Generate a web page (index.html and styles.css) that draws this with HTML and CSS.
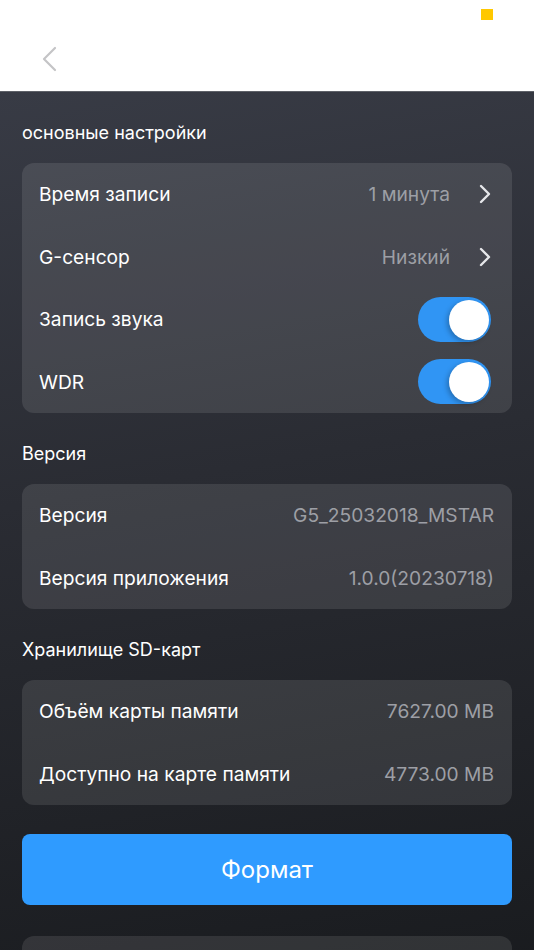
FILE: index.html
```html
<!DOCTYPE html>
<html>
  <head>
    <title>Настройки</title>
    <link rel="stylesheet" href="styles.css">
  </head>
  <body>
    <header class="top-bar">
      <span class="status-dot"></span>
      <button class="back-btn" aria-label="Назад">
        <svg width="16" height="26" viewBox="0 0 16 26">
          <path d="M14 2 L3 13 L14 24" fill="none" stroke="#c4c4c6" stroke-width="2.2" stroke-linecap="round" stroke-linejoin="round"/>
        </svg>
      </button>
    </header>

    <main class="content">
      <h2 class="section-title">основные настройки</h2>
      <div class="card">
        <div class="row">
          <span class="label">Время записи</span>
          <span class="side">
            <span class="value">1 минута</span>
            <svg class="chevron" width="14" height="22" viewBox="0 0 14 22">
              <path d="M3 3 L11 11 L3 19" fill="none" stroke="#e6e7ea" stroke-width="2.4" stroke-linecap="round" stroke-linejoin="round"/>
            </svg>
          </span>
        </div>
        <div class="row">
          <span class="label">G-сенсор</span>
          <span class="side">
            <span class="value">Низкий</span>
            <svg class="chevron" width="14" height="22" viewBox="0 0 14 22">
              <path d="M3 3 L11 11 L3 19" fill="none" stroke="#e6e7ea" stroke-width="2.4" stroke-linecap="round" stroke-linejoin="round"/>
            </svg>
          </span>
        </div>
        <div class="row">
          <span class="label">Запись звука</span>
          <span class="toggle on"><span class="knob"></span></span>
        </div>
        <div class="row">
          <span class="label">WDR</span>
          <span class="toggle on"><span class="knob"></span></span>
        </div>
      </div>

      <h2 class="section-title">Версия</h2>
      <div class="card">
        <div class="row">
          <span class="label">Версия</span>
          <span class="value">G5_25032018_MSTAR</span>
        </div>
        <div class="row">
          <span class="label">Версия приложения</span>
          <span class="value">1.0.0(20230718)</span>
        </div>
      </div>

      <h2 class="section-title">Хранилище SD-карт</h2>
      <div class="card">
        <div class="row">
          <span class="label">Объём карты памяти</span>
          <span class="value">7627.00 MB</span>
        </div>
        <div class="row">
          <span class="label">Доступно на карте памяти</span>
          <span class="value">4773.00 MB</span>
        </div>
      </div>

      <button class="format-btn">Формат</button>

      <div class="card">
        <div class="row"></div>
      </div>
    </main>
  </body>
</html>
```

FILE: styles.css
```css
* {
  box-sizing: border-box;
}

html,
body {
  margin: 0;
  height: 100%;
}

body {
  font-family: Inter, "Noto Sans", sans-serif;
  color: #fff;
  background: #16181b;
  overflow: hidden;
}

.top-bar {
  position: relative;
  height: 92px;
  background: #fff;
  border-bottom: 1px solid #5e6168;
}

.status-dot {
  position: absolute;
  top: 9px;
  left: 481px;
  width: 12px;
  height: 11px;
  background: #ffc800;
}

.back-btn {
  position: absolute;
  top: 46px;
  left: 41px;
  padding: 0;
  border: 0;
  background: none;
}

.content {
  min-height: 858px;
  padding: 0 22px 40px;
  background: linear-gradient(170deg, #383b45 0%, #2a2c33 40%, #17191c 100%);
}

.section-title {
  margin: 0;
  padding: 30px 0 19px;
  font-size: 18px;
  font-weight: 400;
  line-height: 22px;
}

.card {
  background: rgba(255, 255, 255, 0.1);
  border-radius: 12px;
  padding: 0 18px 0 17px;
}

.row {
  display: flex;
  align-items: center;
  justify-content: space-between;
  height: 62.5px;
}

.label {
  font-size: 19.2px;
}

.side {
  display: flex;
  align-items: center;
}

.value {
  font-size: 19.2px;
  color: #9d9fa5;
}

.chevron {
  margin-left: 28px;
  margin-right: 2px;
}

.toggle {
  position: relative;
  width: 73px;
  height: 45px;
  margin-right: 3px;
  border-radius: 23px;
  background: #3095f4;
}

.toggle .knob {
  position: absolute;
  top: 3px;
  right: 2px;
  width: 40px;
  height: 40px;
  border-radius: 50%;
  background: #fff;
  box-shadow: -2px 2px 5px rgba(0, 0, 0, 0.25);
}

.format-btn {
  display: block;
  width: 100%;
  height: 71px;
  margin: 29px 0 31px;
  border: 0;
  border-radius: 8px;
  background: #2f9bff;
  color: #fff;
  font-family: Inter, "Noto Sans", sans-serif;
  font-size: 24px;
}
```
